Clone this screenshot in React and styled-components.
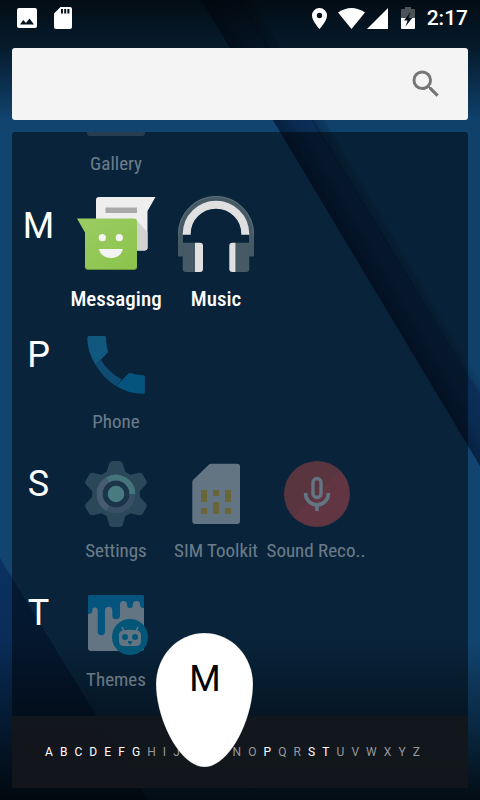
import React from 'react'
import styled, { createGlobalStyle, css } from 'styled-components'

const Color = {
  TEXT: '#ffffff',
  SEARCH: '#f4f4f4',
  SEARCH_ICON: '#757575',
  PANEL: 'rgba(0, 0, 0, 0.48)',
  STRIP: 'rgba(19, 24, 29, 0.92)',
  FADED: '#96989b',
}

const GlobalStyle = createGlobalStyle`
  * {
    box-sizing: border-box;
  }
  body {
    margin: 0;
    background: #0d3d66;
    font-family: Roboto, "Liberation Sans", sans-serif;
  }
  button {
    border: 0;
    padding: 0;
    background: none;
    color: inherit;
    font: inherit;
  }
`

const Wallpaper = () => (
  <Backdrop viewBox="0 0 480 800" preserveAspectRatio="xMidYMid slice" aria-hidden="true">
    <defs>
      <linearGradient id="bandShade" gradientUnits="userSpaceOnUse" x1="273" y1="120" x2="307" y2="100">
        <stop offset="0" stopColor="#06203f" />
        <stop offset="0.5" stopColor="#0a2b52" />
        <stop offset="1" stopColor="#0b2f59" />
      </linearGradient>
      <linearGradient id="edgeShade" gradientUnits="userSpaceOnUse" x1="313" y1="120" x2="325" y2="113">
        <stop offset="0" stopColor="#041c33" stopOpacity="0.45" />
        <stop offset="1" stopColor="#041c33" stopOpacity="0" />
      </linearGradient>
      <linearGradient id="cornerShade" x1="0" y1="0" x2="0" y2="1">
        <stop offset="0" stopColor="#0a3160" />
        <stop offset="1" stopColor="#072549" />
      </linearGradient>
      <linearGradient id="topScrim" x1="0" y1="0" x2="0" y2="1">
        <stop offset="0" stopColor="#000508" stopOpacity="0.88" />
        <stop offset="0.4" stopColor="#000508" stopOpacity="0.64" />
        <stop offset="1" stopColor="#000508" stopOpacity="0" />
      </linearGradient>
      <linearGradient id="bottomScrim" x1="0" y1="0" x2="0" y2="1">
        <stop offset="0" stopColor="#000508" stopOpacity="0" />
        <stop offset="0.6" stopColor="#000508" stopOpacity="0.5" />
        <stop offset="1" stopColor="#000508" stopOpacity="0.88" />
      </linearGradient>
    </defs>
    <rect width="480" height="800" fill="#11446f" />
    <path d="M240 0H480V395Z" fill="#0f416b" />
    <path d="M201 0H240L480 395V466Z" fill="url(#bandShade)" />
    <path d="M238 0H252L480 376V396Z" fill="url(#edgeShade)" />
    <path d="M0 558L148 800H0Z" fill="url(#cornerShade)" />
    <rect width="480" height="120" fill="url(#topScrim)" />
    <rect y="640" width="480" height="160" fill="url(#bottomScrim)" />
  </Backdrop>
)

const GalleryIcon = () => (
  <AppIcon viewBox="0 0 80 80">
    <rect x="11" y="12" width="58" height="57" rx="3" fill="#5a646c" />
  </AppIcon>
)

const MessagingIcon = () => (
  <AppIcon viewBox="0 0 80 80">
    <defs>
      <linearGradient id="bubble" x1="0" y1="0" x2="1" y2="1">
        <stop offset="0" stopColor="#9ccc65" />
        <stop offset="1" stopColor="#8bc34a" />
      </linearGradient>
    </defs>
    <path d="M23 1H79.500L71.500 15V51.500a3 3 0 0 1-3 3H23a3 3 0 0 1-3-3V4a3 3 0 0 1 3-3Z" fill="#eeeeee" />
    <path d="M61 25L71.500 36V51.500a3 3 0 0 1-3 3H61Z" fill="#d2d2d2" />
    <rect x="29.500" y="11.500" width="31.500" height="5.500" fill="#a9a9a9" />
    <path d="M1 22.500H58a3 3 0 0 1 3 3V70.500a3 3 0 0 1-3 3H12a3 3 0 0 1-3-3V36.500Z" fill="url(#bubble)" />
    <path d="M9 70.500a3 3 0 0 0 3 3H58a3 3 0 0 0 3-3" fill="none" stroke="#6d9b3c" strokeWidth="0.8" />
    <circle cx="26.300" cy="41.700" r="3.600" fill="#f4f4f4" />
    <circle cx="43.300" cy="41.700" r="3.600" fill="#f4f4f4" />
    <path d="M23 53H46.700C45 65 25 65 23 53Z" fill="#f4f4f4" />
  </AppIcon>
)

const MusicIcon = () => (
  <AppIcon viewBox="0 0 80 80">
    <path d="M4.500 60.500V38a35.500 35.500 0 0 1 71 0V60.500" fill="none" stroke="#455a64" strokeWidth="5" />
    <path d="M2.500 38a37.500 37.500 0 0 1 75 0" fill="none" stroke="#5a6f79" strokeWidth="1" />
    <path d="M10.700 38.700V38a29.300 29.300 0 0 1 58.600 0V38.700" fill="none" stroke="#e0e0e0" strokeWidth="8" />
    <path d="M19 46.700V76H9.700a3 3 0 0 1-3-3V46.700Z" fill="#455a64" />
    <path d="M19 46.700H24a3 3 0 0 1 3 3V73a3 3 0 0 1-3 3H19Z" fill="#e0e0e0" />
    <path d="M59.500 46.700V76H70.300a3 3 0 0 0 3-3V46.700Z" fill="#455a64" />
    <path d="M59.500 46.700H56.300a3 3 0 0 0-3 3V73a3 3 0 0 0 3 3H59.500Z" fill="#e0e0e0" />
  </AppIcon>
)

const PhoneIcon = () => (
  <AppIcon viewBox="0 0 80 80">
    <path d="M25 35Q33 48 45.700 54.300L40 61Q27 53 19.700 40Z" fill="#1b87c8" />
    <path d="M13.300 11H28.500a1.500 1.500 0 0 1 1.500 1.400Q30.200 20 32 27.300L19.700 40Q11.300 27 11.300 13a2 2 0 0 1 2-2Z" fill="#1fa9e6" />
    <path d="M53.300 47.700Q60 50 67.500 50.200a1.500 1.500 0 0 1 1.300 1.500V67.200a1.500 1.500 0 0 1-1.500 1.500Q53 69 40 61Z" fill="#039fe5" />
  </AppIcon>
)

const TEETH = [0, 60, 120, 180, 240, 300]

const SettingsIcon = () => (
  <AppIcon viewBox="0 0 80 80">
    {TEETH.map(angle => (
      <path
        key={angle}
        d="M30 20L33.200 9.500Q34 7 36.500 7H43.500Q46 7 46.800 9.500L50 20Z"
        transform={`rotate(${angle} 40 40)`}
        fill="#607d8b"
      />
    ))}
    <circle cx="40" cy="40" r="24" fill="#607d8b" />
    <circle cx="40" cy="40" r="13.500" fill="#35505c" />
    <g fill="none" strokeWidth="5.800">
      <circle cx="40" cy="40" r="16.400" stroke="#7d93a8" />
      <path d="M31.800 54.200A16.400 16.400 0 0 1 31.800 25.800" stroke="#a6b4bf" />
      <path d="M31.800 25.800A16.400 16.400 0 0 1 56.400 40" stroke="#9df0dd" />
    </g>
    <circle cx="40" cy="40" r="8.300" fill="#a7ffeb" />
  </AppIcon>
)

const SimIcon = () => (
  <AppIcon viewBox="0 0 80 80">
    <path d="M35 9.700H61a3 3 0 0 1 3 3V67a3 3 0 0 1-3 3H19.300a3 3 0 0 1-3-3V28Q16.300 26.700 17.300 25.700L33 10.500Q34 9.700 35 9.700Z" fill="#eceff1" />
    <path d="M25 36h6v12h-6ZM25 54h6v6h-6ZM37 36h6v6h-6ZM37 48h6v12h-6ZM49 36h6v12h-6ZM49 54h6v6h-6Z" fill="#ffc83a" />
  </AppIcon>
)

const RecorderIcon = () => (
  <AppIcon viewBox="0 0 80 80">
    <circle cx="41" cy="40" r="33" fill="#cf5148" />
    <path d="M64.300 16.700A33 33 0 0 1 17.700 63.300Z" fill="#e65350" />
    <rect x="37" y="24.500" width="8" height="19" rx="4" fill="none" stroke="#eceff1" strokeWidth="3.400" />
    <path d="M29.600 39V39.500a11.400 11.400 0 0 0 22.800 0V39M41 51V57" fill="none" stroke="#eceff1" strokeWidth="3.600" />
  </AppIcon>
)

const ThemesIcon = () => (
  <AppIcon viewBox="0 2 80 80">
    <rect x="12" y="14" width="56" height="56" rx="3" fill="#eceff1" />
    <path
      d="M12 33V17a3 3 0 0 1 3-3H65a3 3 0 0 1 3 3V27Q64 27.500 64 23.500A3.500 3.500 0 0 0 57 23.500A3 3.500 0 0 1 51 23.500A3.500 3.500 0 0 0 44 23.500V34.500A3.800 3.800 0 0 1 36.300 34.500V29.500A3.600 3.600 0 0 0 29 29.500V50.500A3.600 3.600 0 0 1 21.700 50.500V29.500A2.700 3 0 0 0 16.300 29.500Q16.300 33 12 33Z"
      fill="#039fe5"
    />
    <circle cx="54" cy="56" r="18" fill="#00a4d6" />
    <path d="M46 46L48.500 51M62 46L59.500 51" stroke="#eceff1" strokeWidth="1.600" />
    <path d="M47 49.500Q54 48 61 49.500Q65 50 65 54V60Q65 65 60 65H48Q43 65 43 60V54Q43 50 47 49.500Z" fill="#eceff1" />
    <circle cx="49" cy="56" r="3" fill="#00a4d6" />
    <circle cx="59" cy="56" r="3" fill="#00a4d6" />
    <path d="M52 60H56V61.500L54.500 63.500H53.500L52 61.500Z" fill="#00a4d6" />
  </AppIcon>
)

const SECTIONS = [
  { letter: '', apps: [['Gallery', GalleryIcon]] },
  { letter: 'M', active: true, apps: [['Messaging', MessagingIcon], ['Music', MusicIcon]] },
  { letter: 'P', apps: [['Phone', PhoneIcon]] },
  { letter: 'S', apps: [['Settings', SettingsIcon], ['SIM Toolkit', SimIcon], ['Sound Reco..', RecorderIcon]] },
  { letter: 'T', apps: [['Themes', ThemesIcon]] },
]

const ALPHABET = 'ABCDEFGHIJKLMNOPQRSTUVWXYZ'.split('')
const USED = 'ABCDEFGMPST'

const StatusIcons = () => (
  <StatusBar>
    <svg width="20" height="20" viewBox="0 0 20 20" fill="#fff">
      <path fillRule="evenodd" d="M2 0H18a2 2 0 0 1 2 2V18a2 2 0 0 1-2 2H2a2 2 0 0 1-2-2V2a2 2 0 0 1 2-2ZM3 16.500H17L12.500 10.500L9 15L6.200 12Z" />
    </svg>
    <SdIcon width="18" height="22" viewBox="0 0 18 22" fill="#fff">
      <path fillRule="evenodd" d="M6.500 0H16a2 2 0 0 1 2 2V20a2 2 0 0 1-2 2H2a2 2 0 0 1-2-2V6.500ZM7 2V6.500H9V2ZM10.200 2V6.500H12.200V2ZM13.400 2V6.500H15.400V2Z" />
    </SdIcon>
    <svg width="15" height="21" viewBox="0 0 15 21" fill="#fff">
      <path fillRule="evenodd" d="M7.500 0A7.400 7.400 0 0 1 15 7.500C15 13 7.500 21 7.500 21S0 13 0 7.500A7.400 7.400 0 0 1 7.500 0ZM7.500 4.800A2.700 2.700 0 1 0 7.500 10.200A2.700 2.700 0 0 0 7.500 4.800Z" />
    </svg>
    <WifiIcon width="27" height="21" viewBox="0 0 27 21" fill="#fff">
      <path d="M0 4.500Q13.500 -4.500 27 4.500L13.500 21Z" />
    </WifiIcon>
    <SignalIcon width="21" height="21" viewBox="0 0 21 21" fill="#fff">
      <path d="M21 0V21H0Z" />
    </SignalIcon>
    <svg width="14" height="22" viewBox="0 0 14 22">
      <path d="M4 0H10V2H13a1 1 0 0 1 1 1V11H0V3a1 1 0 0 1 1-1H4Z" fill="#4d5459" />
      <path d="M0 11H14V21a1 1 0 0 1-1 1H1a1 1 0 0 1-1-1Z" fill="#fff" />
      <path d="M9.500 5L3 13.500H6.500L4.500 19.500L11.200 11H7.600Z" fill="#06121c" />
    </svg>
    <Clock>2:17</Clock>
  </StatusBar>
)

export default function App() {
  return (
    <Screen>
      <GlobalStyle />
      <Wallpaper />
      <StatusIcons />
      <SearchBar>
        <SearchInput type="text" aria-label="Search apps" />
        <SearchButton type="button" aria-label="Search">
          <svg width="36" height="36" viewBox="0 0 24 24" fill={Color.SEARCH_ICON}>
            <path d="M15.500 14h-.79l-.28-.27A6.471 6.471 0 0 0 16 9.500 6.500 6.500 0 1 0 9.500 16c1.610 0 3.090-.59 4.230-1.570l.27.28v.79l5 4.990L20.490 19l-4.990-5zm-6 0C7.010 14 5 11.990 5 9.500S7.010 5 9.500 5 14 7.010 14 9.500 11.990 14 9.500 14z" />
          </svg>
        </SearchButton>
      </SearchBar>
      <Drawer>
        <AppList>
          {SECTIONS.map(({ letter, active, apps }) => (
            <Section key={letter} $clipped={!letter}>
              <SectionLetter>{letter}</SectionLetter>
              {apps.map(([name, Icon]) => (
                <AppButton key={name} type="button" $active={active}>
                  <Icon />
                  <AppName $active={active}>{name}</AppName>
                </AppButton>
              ))}
            </Section>
          ))}
        </AppList>
        <IndexStrip>
          {ALPHABET.map(letter => (
            <IndexKey key={letter} type="button" $used={USED.includes(letter)}>{letter}</IndexKey>
          ))}
          <Marker>
            <MarkerShape viewBox="0 0 98 136" aria-hidden="true">
              <path
                d="M48.500 1C76.500 1 97 25 97 52C97 87 73.500 135 48.500 135C23.500 135 0 87 0 52C0 25 20.500 1 48.500 1Z"
                fill="#fff"
                stroke="rgba(0, 0, 0, 0.3)"
                strokeWidth="0.5"
              />
            </MarkerShape>
            <MarkerLetter>M</MarkerLetter>
          </Marker>
        </IndexStrip>
      </Drawer>
    </Screen>
  )
}

const Screen = styled.main`
  position: relative;
  display: flex;
  flex-direction: column;
  min-height: 100vh;
  padding: 0 12px 12px;
  overflow: hidden;
  isolation: isolate;
`

const Backdrop = styled.svg`
  position: absolute;
  inset: 0;
  z-index: -1;
  width: 100%;
  height: 100%;
`

const StatusBar = styled.header`
  display: flex;
  align-items: center;
  height: 36px;
  margin-bottom: 12px;
  padding-left: 5px;
`

const SdIcon = styled.svg`
  margin-left: 17px;
  margin-right: auto;
`

const WifiIcon = styled.svg`
  margin-left: 11px;
`

const SignalIcon = styled.svg`
  margin: 0 13px 0 2px;
`

const Clock = styled.time`
  margin-left: 12px;
  color: ${Color.TEXT};
  font-size: 21px;
  font-weight: 500;
  line-height: 38px;
`

const SearchBar = styled.div`
  display: flex;
  align-items: center;
  height: 72px;
  margin-bottom: 12px;
  padding: 0 24px;
  border-radius: 3px;
  background: ${Color.SEARCH};
`

const SearchInput = styled.input`
  flex: 1;
  min-width: 0;
  border: 0;
  outline: 0;
  background: transparent;
  font: 24px Roboto, sans-serif;
`

const SearchButton = styled.button`
  display: flex;
`

const Drawer = styled.section`
  display: flex;
  flex: 1;
  flex-direction: column;
  border-radius: 3px;
  background: ${Color.PANEL};
`

const AppList = styled.div`
  flex: 1;
`

const Section = styled.div`
  display: flex;
  height: 129px;
  ${props => props.$clipped && css`
    height: 64px;
    align-items: flex-end;
    overflow: hidden;
  `}
`

const SectionLetter = styled.h2`
  width: 54px;
  margin: 0;
  padding: 12px 1px 0 0;
  color: ${Color.TEXT};
  font-size: 36px;
  font-weight: 400;
  line-height: 36px;
  text-align: center;
`

const AppButton = styled.button`
  display: flex;
  flex-direction: column;
  align-items: center;
  gap: ${props => props.$active ? 8 : 2}px;
  width: 100px;
  height: 129px;
  opacity: ${props => props.$active ? 1 : 0.4};
`

const AppIcon = styled.svg`
  flex: none;
  width: 80px;
  height: 80px;
`

const AppName = styled.span`
  color: ${Color.TEXT};
  font-family: "Roboto Condensed", "Liberation Sans Narrow", Roboto, sans-serif;
  font-size: ${props => props.$active ? 21 : 19}px;
  font-weight: ${props => props.$active ? 500 : 400};
  line-height: 30px;
  white-space: nowrap;
`

const IndexStrip = styled.nav`
  position: relative;
  display: flex;
  align-items: center;
  justify-content: space-between;
  height: 72px;
  padding: 0 48px 0 33px;
  background: ${Color.STRIP};
`

const IndexKey = styled.button`
  color: ${props => props.$used ? Color.TEXT : Color.FADED};
  font-size: 12px;
  font-weight: 400;
  line-height: 24px;
`

const Marker = styled.div`
  position: absolute;
  bottom: 20px;
  left: 144px;
  display: grid;
  width: 98px;
  height: 136px;
`

const MarkerShape = styled.svg`
  grid-area: 1 / 1;
  width: 100%;
  height: 100%;
`

const MarkerLetter = styled.span`
  grid-area: 1 / 1;
  padding-top: 28px;
  color: #000;
  font-size: 36px;
  line-height: 38px;
  text-align: center;
`
